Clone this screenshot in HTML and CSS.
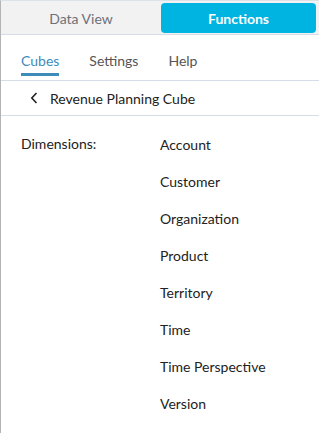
FILE: index.html
```html
<!DOCTYPE html>
<html>
<head>
<meta charset="utf-8">
<link rel="stylesheet" href="styles.css">
</head>
<body>
<div class="panel">
  <div class="switch">
    <div class="switch-item left">Data View</div>
    <div class="switch-item active">Functions</div>
  </div>
  <div class="tabs">
    <div class="tab active">Cubes</div>
    <div class="tab">Settings</div>
    <div class="tab">Help</div>
  </div>
  <div class="crumb">
    <svg class="chev" width="8" height="12" viewBox="0 0 8 12"><path d="M6.5 1 L1.8 6 L6.5 11" fill="none" stroke="#222" stroke-width="1.6"/></svg>
    <span>Revenue Planning Cube</span>
  </div>
  <div class="dims">
    <div class="label">Dimensions:</div>
    <ul class="list">
      <li>Account</li>
      <li>Customer</li>
      <li>Organization</li>
      <li>Product</li>
      <li>Territory</li>
      <li>Time</li>
      <li>Time Perspective</li>
      <li>Version</li>
    </ul>
  </div>
</div>
</body>
</html>
```
FILE: styles.css
```css
* { box-sizing: border-box; }
html, body { margin: 0; padding: 0; background: #fff; }
body { font-family: Lato, "Open Sans", sans-serif; font-size: 14px; color: #222; }
.panel {
  width: 319px;
  height: 433px;
  border-left: 1px solid #b4b4b4;
  border-top: 1px solid #dde2ea;
}
.switch {
  display: flex;
  background: #f2f2f2;
  height: 34px;
  padding: 2px 3px 0 0;
  border-bottom: 1px solid #d6dce5;
}
.switch-item {
  display: flex;
  align-items: center;
  justify-content: center;
  height: 30px;
  color: #6d7079;
  font-size: 14px;
}
.switch-item.left { width: 160px; }
.switch-item.active {
  flex: 1;
  background: #00b4e1;
  color: #fff;
  font-weight: bold;
  border-radius: 4px;
}
.tabs {
  display: flex;
  gap: 30px;
  padding: 0 0 0 20px;
  height: 46px;
  border-bottom: 1px solid #d6dce5;
}
.tab {
  color: #555;
  font-size: 14px;
  padding-top: 17px;
  height: 41px;
  border-bottom: 3px solid transparent;
}
.tab.active {
  color: #3d8bbb;
  border-bottom-color: #3d8bbb;
}
.crumb {
  display: flex;
  align-items: center;
  height: 35px;
  padding-left: 29px;
  gap: 12px;
  border-bottom: 1px solid #d6dce5;
  font-size: 14px;
}
.dims {
  display: flex;
  padding: 19px 0 0 20px;
}
.label { width: 139px; }
.list { list-style: none; margin: 0; padding: 0; }
.list li { height: 37px; line-height: 20px; }
```
